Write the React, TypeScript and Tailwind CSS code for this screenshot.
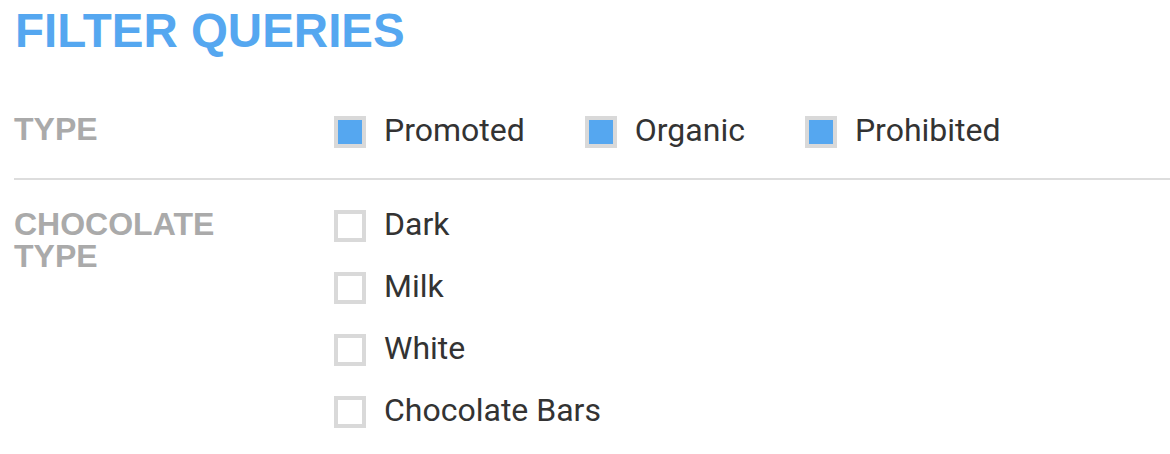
const typeOptions = [
  { label: "Promoted", checked: true },
  { label: "Organic", checked: true },
  { label: "Prohibited", checked: true },
];

const chocolateOptions = [
  { label: "Dark", checked: false },
  { label: "Milk", checked: false },
  { label: "White", checked: false },
  { label: "Chocolate Bars", checked: false },
];

function Checkbox({ label, checked }: { label: string; checked: boolean }) {
  return (
    <label className="flex items-center gap-[18px] cursor-pointer">
      <span className="w-8 h-8 border-4 border-[#d9d9d9] bg-white flex">
        {checked && <span className="flex-1 bg-[#55a7f0]" />}
      </span>
      <span className="text-[32px] leading-[32px] -mt-[3px] text-[#333333]">{label}</span>
    </label>
  );
}

export default function App() {
  return (
    <div
      className="pl-[14px] bg-white min-h-[454px]"
      style={{ fontFamily: "Roboto, 'Liberation Sans', sans-serif" }}
    >
      <h1 className="pt-[7px] pl-[1px] text-[47.5px] leading-none font-bold text-[#55a7f0] font-['Liberation_Sans',Arial,sans-serif]">
        FILTER QUERIES
      </h1>

      <div className="mt-[61px] flex pb-[30px] border-b-2 border-[#dddddd]">
        <div className="w-[320px] -mt-[3px] text-[32px] leading-[32px] font-bold text-[#aaaaaa] font-['Liberation_Sans',Arial,sans-serif]">
          TYPE
        </div>
        <div className="flex gap-[60px]">
          {typeOptions.map((o) => (
            <Checkbox key={o.label} {...o} />
          ))}
        </div>
      </div>

      <div className="pt-[30px] flex">
        <div className="w-[320px] -mt-[2px] text-[32px] leading-[32px] font-bold text-[#aaaaaa] font-['Liberation_Sans',Arial,sans-serif]">
          CHOCOLATE
          <br />
          TYPE
        </div>
        <div className="flex flex-col gap-[30px]">
          {chocolateOptions.map((o) => (
            <Checkbox key={o.label} {...o} />
          ))}
        </div>
      </div>
    </div>
  );
}
